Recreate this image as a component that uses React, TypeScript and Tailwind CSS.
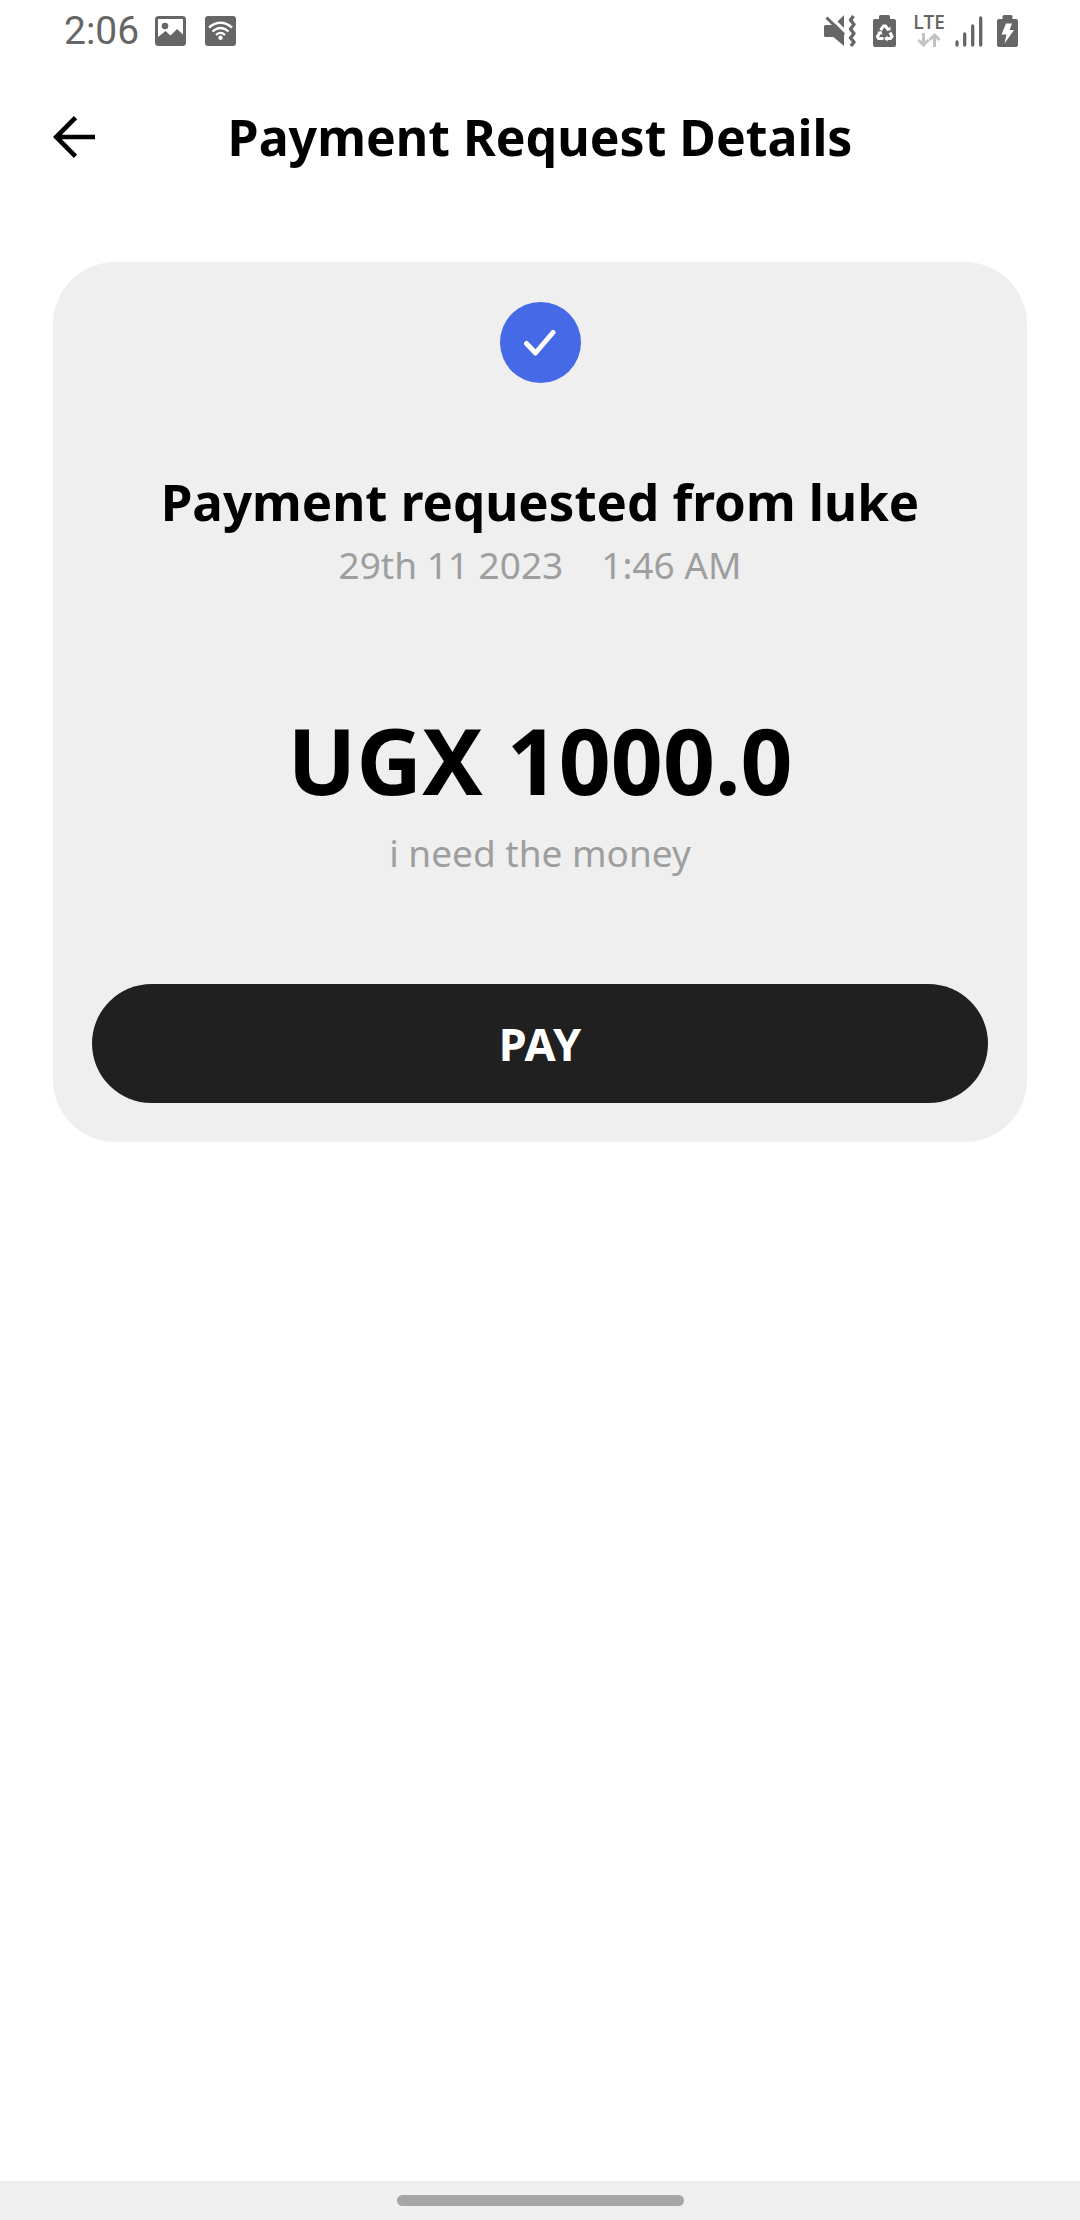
import type { ReactNode } from "react";

function StatusBar() {
  return (
    <div className="flex h-[62px] items-center justify-between pl-16 pr-[62px] text-[#666666]">
      <div className="flex items-center gap-[19px]">
        <div className="flex items-center gap-4">
          <time className="font-['Roboto',sans-serif] text-[39px] leading-[44px]">2:06</time>
          <svg width="31" height="30" viewBox="0 0 31 30" aria-hidden="true">
            <rect x="1.5" y="1.5" width="28" height="27" rx="2" fill="none" stroke="currentColor" strokeWidth="3" />
            <circle cx="10" cy="10" r="3.3" fill="currentColor" />
            <path d="M3 21l7.5-6 5 4.5L22 13l7 6.500V29H3z" fill="currentColor" />
          </svg>
        </div>
        <svg width="31" height="30" viewBox="0 0 31 30" aria-hidden="true">
          <rect width="31" height="30" rx="3" fill="currentColor" />
          <g fill="none" stroke="#fff" strokeWidth="2.3">
            <path d="M4 11.500Q15.500 2 27 11.500" />
            <path d="M7.500 15.500Q15.500 8.500 23.500 15.500" />
            <path d="M11 19Q15.500 14.800 20 19" />
          </g>
          <circle cx="15.500" cy="21.800" r="2.200" fill="#fff" />
        </svg>
      </div>
      <div className="flex items-center gap-[17px]">
        <svg width="32" height="32" viewBox="0 0 32 32" aria-hidden="true">
          <path d="M0 11.500Q0 10 1.500 10H7l4-1.500 9 9V31L9.500 22H1.500Q0 22 0 20.500zM20 0v13l-6.500-6.500z" fill="currentColor" />
          <path d="M2.500 2.500L20 20" stroke="currentColor" strokeWidth="3" />
          <path d="M29.500 1l-3 4 3.500 4.500-3.500 4.500 3.500 4.500-3.500 4.500 3.500 4-3 4" fill="none" stroke="currentColor" strokeWidth="3.400" strokeLinejoin="round" />
        </svg>
        <svg width="23" height="32" viewBox="0 0 23 32" aria-hidden="true">
          <path d="M6 4V1.500Q6 0 7.500 0h8Q17 0 17 1.500V4h4q2 0 2 2v24q0 2-2 2H2q-2 0-2-2V6q0-2 2-2z" fill="currentColor" />
          <g fill="none" stroke="#fff" strokeWidth="3">
            <path d="M7.500 15l3-4h2l3 4" />
            <path d="M17 17.500l2 4-1.500 2H13" />
            <path d="M10.500 23.500h-5L4.500 21.500l2.500-4" />
          </g>
          <path d="M13.500 15.500h4v-4zM14.500 20.500v6l-3.500-3zM4 17l4.500-1 1 4z" fill="#fff" />
        </svg>
        <div className="flex items-center gap-2.5">
          <div className="flex w-8 flex-col items-center gap-1">
            <span className="font-['Open_Sans',sans-serif] text-[19px] font-semibold leading-[14px]">LTE</span>
            <svg width="24" height="14" viewBox="0 0 24 14" aria-hidden="true">
              <path d="M6.500 0v11M1.500 7l5 5 5-5M17.500 14V3M12.500 7l5-5 5 5" fill="none" stroke="#c2c2c2" strokeWidth="3" />
            </svg>
          </div>
          <svg width="28" height="31" viewBox="0 0 28 31" aria-hidden="true">
            <path d="M2 26v3M9.700 18v11M17.700 10v19M25.700 2v27" stroke="currentColor" strokeWidth="3.300" strokeLinecap="round" />
          </svg>
          <svg className="ml-1" width="21" height="32" viewBox="0 0 21 32" aria-hidden="true">
            <path d="M5.500 4V1.500Q5.500 0 7 0h7q1.500 0 1.500 1.500V4H19q2 0 2 2v24q0 2-2 2H2q-2 0-2-2V6q0-2 2-2z" fill="currentColor" />
            <path d="M9 8.500h6l-2.500 6.500H17L7.500 28.500 9.500 19.500H4.500z" fill="#fff" />
          </svg>
        </div>
      </div>
    </div>
  );
}

function Muted({ children }: { children: ReactNode }) {
  return <p className="mt-1.5 text-[37px] leading-[48px] text-[#9e9e9e]">{children}</p>;
}

export default function App() {
  return (
    <div className="flex min-h-screen flex-col bg-white font-['Noto_Sans',sans-serif] text-black">
      <StatusBar />
      <header className="grid h-[150px] grid-cols-[42px_1fr_42px] items-center px-[53px]">
        <button type="button" aria-label="Back">
          <svg width="42" height="42" viewBox="0 0 42 42" fill="none" stroke="currentColor" strokeWidth="4.700" aria-hidden="true">
            <path d="M22.500 1.700L3.200 21l19.300 19.300M3 21h39" />
          </svg>
        </button>
        <h1 className="text-center text-[50px] font-bold leading-[68px]">Payment Request Details</h1>
      </header>
      <main className="flex-1 px-[53px] pt-[50px]">
        <section className="flex flex-col items-center rounded-[62px] bg-[#efefef] px-[39px] pb-[39px] pt-10 text-center">
          <div className="flex size-[81px] items-center justify-center rounded-full bg-[#4569e7]">
            <svg width="32" height="26" viewBox="0 0 32 26" fill="none" stroke="#fff" strokeWidth="5" strokeLinecap="round" strokeLinejoin="round" aria-hidden="true">
              <path d="M2.500 13.500L11.500 23L29 2.500" />
            </svg>
          </div>
          <h2 className="mt-[84px] text-[51px] font-bold leading-[68px]">Payment requested from luke</h2>
          <Muted>
            <span>29th 11 2023</span>
            <span className="ml-[38px]">1:46 AM</span>
          </Muted>
          <p className="mt-[108px] text-[91px] font-bold leading-[126px]">UGX 1000.0</p>
          <Muted>i need the money</Muted>
          <button type="button" className="mt-[107px] h-[119px] w-full rounded-full bg-[#202020] text-[45px] font-bold text-white">
            PAY
          </button>
        </section>
      </main>
      <footer className="flex h-[39px] items-center justify-center bg-[#f0f0f0]">
        <div className="h-[11px] w-[287px] rounded-full bg-[#a6a6a6]" />
      </footer>
    </div>
  );
}
